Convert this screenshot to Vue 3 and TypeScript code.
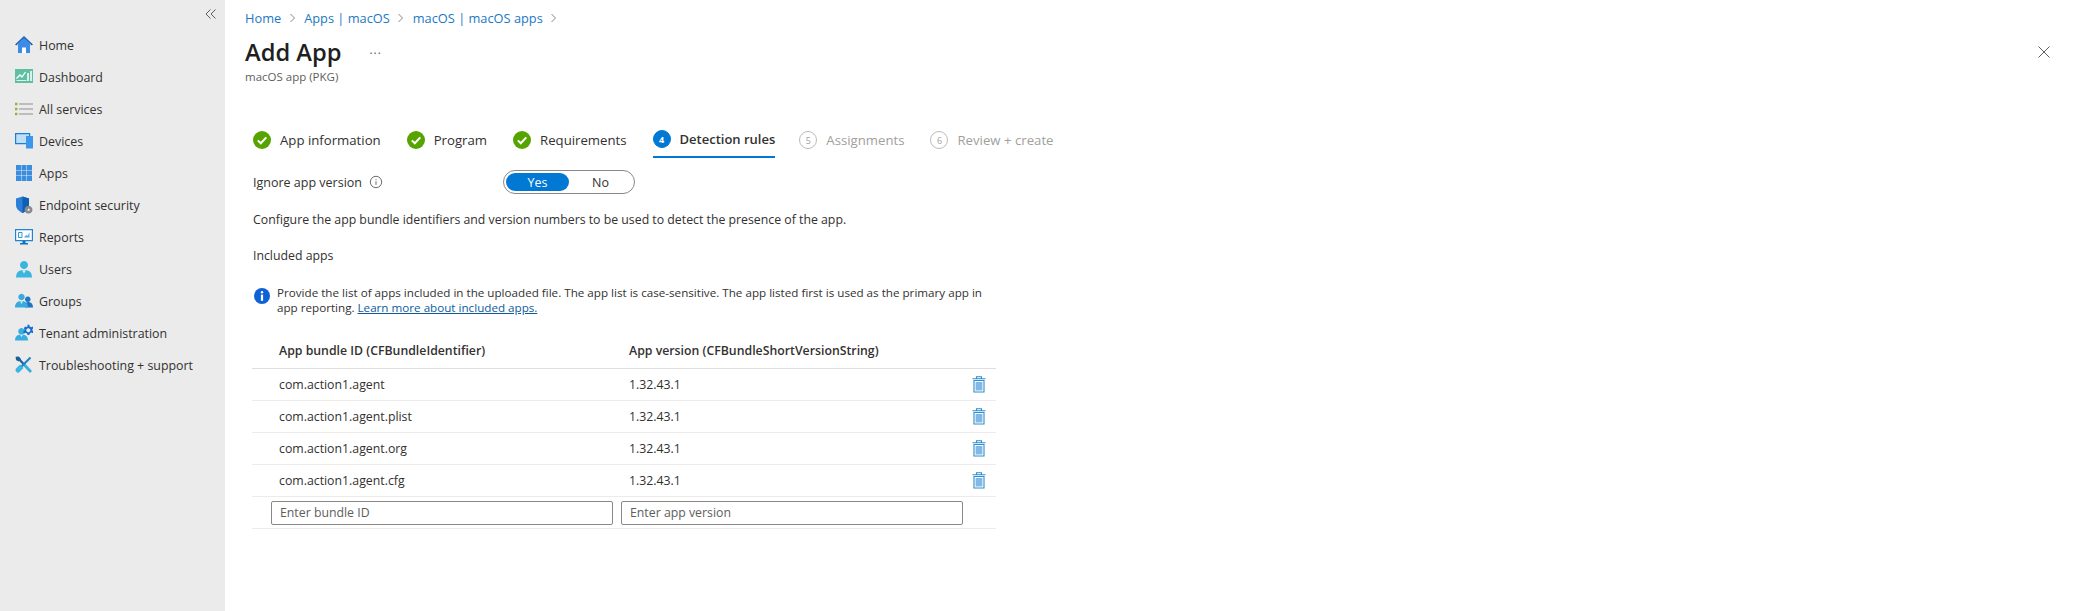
<template>
  <div class="page">
    <aside class="sidebar">
      <div class="collapse">
        <svg width="12" height="12" viewBox="0 0 12 12" fill="none" stroke="#605e5c" stroke-width="1">
          <path d="M5.500 1.500 1 6l4.500 4.500M10.500 1.500 6 6l4.500 4.500" />
        </svg>
      </div>
      <nav class="nav">
        <a v-for="item in navItems" :key="item.label" class="nav-item">
          <svg class="nav-icon" width="18" height="18" viewBox="0 0 18 18">
            <path
              v-for="(p, i) in item.icon"
              :key="i"
              :d="p.d"
              :fill="p.fill ?? 'none'"
              :stroke="p.stroke"
              :stroke-width="p.sw"
              fill-rule="evenodd"
            />
          </svg>
          <span>{{ item.label }}</span>
        </a>
      </nav>
    </aside>

    <main class="main">
      <div class="topbar">
        <div>
          <div class="crumbs">
            <template v-for="c in crumbs" :key="c">
              <a class="crumb">{{ c }}</a>
              <svg class="crumb-sep" width="8" height="10" viewBox="0 0 8 10" fill="none" stroke="#8a8886">
                <path d="M1.500 1 5.500 5l-4 4" />
              </svg>
            </template>
          </div>
          <div class="title-row">
            <h1>Add App</h1>
            <span class="more">...</span>
          </div>
          <div class="subtitle">macOS app (PKG)</div>
        </div>
        <svg class="close" width="12" height="12" viewBox="0 0 12 12" stroke="#605e5c" stroke-width="1">
          <path d="M.5.5l11 11M11.500.5l-11 11" />
        </svg>
      </div>

      <div class="steps">
        <div v-for="s in steps" :key="s.label" class="step" :class="s.state">
          <svg v-if="s.state === 'done'" width="18" height="18" viewBox="0 0 18 18">
            <circle cx="9" cy="9" r="9" fill="#57a300" />
            <path d="M4.800 9.400 7.800 12.300 13.300 6.400" fill="none" stroke="#fff" stroke-width="2" />
          </svg>
          <span v-else class="step-num">{{ s.num }}</span>
          <span class="step-label">{{ s.label }}</span>
        </div>
      </div>

      <div class="form">
        <div class="field-row">
          <label class="field-label">
            Ignore app version
            <svg width="14" height="14" viewBox="0 0 14 14" fill="none" stroke="#605e5c">
              <circle cx="7" cy="7" r="5.700" stroke-width=".9" />
              <path d="M7 6.200v3.600M7 4.200v1" stroke-width=".9" />
            </svg>
          </label>
          <div class="toggle">
            <span class="opt on">Yes</span>
            <span class="opt">No</span>
          </div>
        </div>

        <p class="desc">Configure the app bundle identifiers and version numbers to be used to detect the presence of the app.</p>
        <p class="section-label">Included apps</p>

        <div class="notice">
          <svg width="18" height="18" viewBox="0 0 18 18">
            <circle cx="9" cy="9" r="8" fill="#0f62d6" />
            <circle cx="9" cy="5.200" r="1.200" fill="#fff" />
            <path d="M7.900 7.600h2.200v6.200H7.900z" fill="#fff" />
          </svg>
          <div class="notice-text">
            <div>Provide the list of apps included in the uploaded file. The app list is case-sensitive. The app listed first is used as the primary app in</div>
            <div class="notice-line">
              <span>app reporting.</span>
              <a class="learn">Learn more about included apps.</a>
            </div>
          </div>
        </div>

        <div class="table">
          <div class="row head">
            <span class="c1">App bundle ID (CFBundleIdentifier)</span>
            <span class="c2">App version (CFBundleShortVersionString)</span>
          </div>
          <div v-for="b in bundles" :key="b" class="row">
            <span class="c1">{{ b }}</span>
            <span class="c2">1.32.43.1</span>
            <svg class="trash" width="14" height="17" viewBox="0 0 14 17">
              <path d="M2 4.500h10V16H2z" fill="#fff" stroke="#2f8fd0" stroke-width="1.100" />
              <path d="M3.600 6h6.800v8.500H3.600z" fill="#82b8e6" />
              <path d="M.5 2.800h13M4.500 2.600V.8h5v1.800" fill="none" stroke="#2f8fd0" stroke-width="1.100" />
            </svg>
          </div>
          <div class="row inputs">
            <input class="box" placeholder="Enter bundle ID" />
            <input class="box" placeholder="Enter app version" />
          </div>
        </div>
      </div>
    </main>
  </div>
</template>

<script setup lang="ts">
interface IconPath {
  d: string
  fill?: string
  stroke?: string
  sw?: number
}

const navItems: { label: string; icon: IconPath[] }[] = [
  {
    label: 'Home',
    icon: [
      { d: 'M3 8 9 2.500 15 8v9H3z', fill: '#3c8ce7' },
      { d: 'M7 17v-5.500h4V17z', fill: '#fff' },
      { d: 'M9 0l9 8.600-1.300 1L9 2.400 1.300 9.600 0 8.600z', fill: '#1a66bd' },
    ],
  },
  {
    label: 'Dashboard',
    icon: [
      { d: 'M0 1h18v14H0z', fill: '#5fbfa2' },
      { d: 'M1.500 10.500 5 7l2 2 3.500-5', stroke: '#fff', sw: 1.300 },
      { d: 'M1.500 12.500h10', stroke: '#dff3ec', sw: 1 },
      { d: 'M13 5v8M16 3v10', stroke: '#eef8f5', sw: 1.700 },
    ],
  },
  {
    label: 'All services',
    icon: [
      { d: 'M4 4h14M4 9h14M4 14h14', stroke: '#8f8f8f', sw: 1.200 },
      { d: 'M0 2.800h2.400v2.400H0zM0 7.800h2.400v2.400H0zM0 12.800h2.400v2.400H0z', fill: '#8db43c' },
    ],
  },
  {
    label: 'Devices',
    icon: [
      { d: 'M.6 1.600h14v10H.6z', fill: '#bfdff5', stroke: '#1c7fd6', sw: 1.200 },
      { d: 'M11 4h7v12.500h-7z', fill: '#3d96e8' },
    ],
  },
  {
    label: 'Apps',
    icon: [
      {
        d: 'M1 1h5v5H1zM6.500 1h5v5h-5zM12 1h5v5h-5zM1 6.500h5v5H1zM6.500 6.500h5v5h-5zM12 6.500h5v5h-5zM1 12h5v5H1zM6.500 12h5v5h-5zM12 12h5v5h-5z',
        fill: '#3a8ee0',
      },
    ],
  },
  {
    label: 'Endpoint security',
    icon: [
      { d: 'M7.500.4 14 2.500v6.500c0 4-3.500 6.500-6.500 8C4.500 15.500 1 13 1 9V2.500z', fill: '#2a80d8' },
      { d: 'M7.500.4 14 2.500v6.500c0 4-3.500 6.500-6.500 8z', fill: '#0f5fb2' },
      { d: 'M13.500 9.800a3.900 3.900 0 1 0 .01 0zM13.500 12.400a1.300 1.300 0 1 1-.01 0z', fill: '#8a8a8a' },
    ],
  },
  {
    label: 'Reports',
    icon: [
      { d: 'M.6 1.600h16.800v11H.6z', fill: '#fff', stroke: '#1b86d8', sw: 1.200 },
      { d: 'M3.500 4.500h3.500v5H3.500z', fill: 'none', stroke: '#2a9bd8', sw: 1 },
      { d: 'M9 9.500 11 7l1.500 1 2-3.500v5z', fill: '#5aa8e0' },
      { d: 'M7.500 13h3v2h2.500v1.500H5V15h2.500z', fill: '#1571b8' },
    ],
  },
  {
    label: 'Users',
    icon: [
      { d: 'M9 1a4 4 0 1 1-.01 0z', fill: '#38b4e0' },
      { d: 'M1 17.400c0-5 2.800-7.400 8-7.400s8 2.400 8 7.400z', fill: '#3cb6dc' },
      { d: 'M7 10.300 9 13.500l2-3.200z', fill: '#d5f0f9' },
    ],
  },
  {
    label: 'Groups',
    icon: [
      { d: 'M12.800 4.500a2.800 2.800 0 1 1-.01 0z', fill: '#1f74c4' },
      { d: 'M10 15.500c0-3.500 1-5.500 3-5.500s5 1 5 5.500z', fill: '#1f74c4' },
      { d: 'M6.500 1.800a3.200 3.200 0 1 1-.01 0z', fill: '#3aa9dc' },
      { d: 'M0 15.500c0-4 2-6.500 6.500-6.500s6.500 2.500 6.500 6.500z', fill: '#3aa9dc' },
      { d: 'M5 9.300 6.500 12 8 9.300z', fill: '#d5f0f9' },
    ],
  },
  {
    label: 'Tenant administration',
    icon: [
      { d: 'M6.500 4a3.300 3.300 0 1 1-.01 0z', fill: '#36aee0' },
      { d: 'M0 16.500c0-4 2.300-6 6.500-6s6.500 2 6.500 6z', fill: '#36aee0' },
      { d: 'M5 10.700 6.500 13 8 10.700z', fill: '#d5f0f9' },
      {
        d: 'M12.300.8h2l.4 1.700 1.500.700 1.500-.8.900 1.600-1.200 1.200.1 1.300 1.100 1.100-.900 1.700-1.500-.7-1.400.9-.4 1.600h-1.900l-.5-1.700-1.300-.7-1.600.7-1-1.600 1.300-1.200V5.400L9 4.200 9.900 2.500l1.700.6 1-.7zM13.300 4.300a2 2 0 1 0 .01 0z',
        fill: '#1570cc',
      },
    ],
  },
  {
    label: 'Troubleshooting + support',
    icon: [
      { d: 'M3 2 9 8.500', stroke: '#1b5f9e', sw: 2.200 },
      { d: 'M9 8.500 16 16', stroke: '#36b0dc', sw: 2.800 },
      { d: 'M15.500 1.500 3.500 13.500', stroke: '#1f83c4', sw: 2.200 },
      { d: 'M5 8.500 1 12.500c-1.500 2 .5 5 3 4l4.500-4.500z', fill: '#3db5e0' },
      { d: 'M.6.800 3.800.4 6 3 3.500 5.500 1 4z', fill: '#1b5f9e' },
    ],
  },
]

const crumbs = ['Home', 'Apps | macOS', 'macOS | macOS apps']

const steps = [
  { label: 'App information', state: 'done', num: 1 },
  { label: 'Program', state: 'done', num: 2 },
  { label: 'Requirements', state: 'done', num: 3 },
  { label: 'Detection rules', state: 'active', num: 4 },
  { label: 'Assignments', state: 'todo', num: 5 },
  { label: 'Review + create', state: 'todo', num: 6 },
]

const bundles = ['com.action1.agent', 'com.action1.agent.plist', 'com.action1.agent.org', 'com.action1.agent.cfg']
</script>

<style>
html,
body {
  margin: 0;
  background: #fff;
}
</style>

<style scoped>
.page {
  display: flex;
  height: 611px;
  overflow: hidden;
  font-family: 'Open Sans', 'Noto Sans', sans-serif;
  font-size: 12.4px;
  color: #323130;
}

.sidebar {
  width: 225px;
  flex: none;
  background: #ebebeb;
  box-sizing: border-box;
  padding-top: 8px;
}

.collapse {
  display: flex;
  justify-content: flex-end;
  padding-right: 8px;
  height: 21px;
}

.nav {
  display: flex;
  flex-direction: column;
}

.nav-item {
  display: flex;
  align-items: center;
  gap: 6px;
  height: 32px;
  padding-left: 15px;
}

.main {
  flex: 1;
  min-width: 0;
  padding-left: 20px;
}

.topbar {
  display: flex;
  justify-content: space-between;
  align-items: flex-start;
  padding-top: 9px;
}

.close {
  margin: 37px 23px 0 0;
}

.crumbs {
  display: flex;
  align-items: center;
  height: 18px;
  gap: 7.500px;
  font-size: 12.800px;
}

.crumb {
  color: #1b78c4;
}

.title-row {
  display: flex;
  align-items: center;
  margin-top: 9px;
  height: 32px;
}

h1 {
  margin: 0;
  font-size: 23.700px;
  font-weight: 600;
  color: #201f1e;
  line-height: 32px;
}

.more {
  margin-left: 28px;
  color: #605e5c;
  font-size: 12px;
  letter-spacing: 1px;
  position: relative;
  top: -3px;
}

.subtitle {
  font-size: 11.500px;
  color: #605e5c;
  margin-top: 1px;
  line-height: 16px;
}

.steps {
  display: flex;
  margin: 39px 0 0 8px;
  gap: 26px;
  height: 36px;
  font-size: 13.200px;
}

.step {
  display: flex;
  align-items: center;
  gap: 9px;
  height: 32px;
  box-sizing: border-box;
}

.step.active {
  border-bottom: 2px solid #0078d4;
  height: 34px;
  padding-bottom: 2px;
  margin-right: -2px;
}

.step.active .step-label {
  font-weight: 600;
  font-size: 13px;
}

.step.todo {
  color: #a19f9d;
}

.step-num {
  box-sizing: border-box;
  width: 18px;
  height: 18px;
  border-radius: 50%;
  display: flex;
  align-items: center;
  justify-content: center;
  font-size: 9px;
  border: 1px solid #bdbbb9;
}

.step.active .step-num {
  background: #0078d4;
  border-color: #0078d4;
  color: #fff;
  font-weight: 700;
}

.form {
  padding-left: 8px;
  width: 744px;
  font-size: 12.300px;
}

.field-row {
  display: flex;
  align-items: center;
  height: 24px;
  margin-top: 10px;
}

.field-label {
  display: flex;
  align-items: center;
  gap: 7px;
  width: 250px;
  font-size: 12.500px;
}

.toggle {
  box-sizing: border-box;
  width: 132px;
  height: 24px;
  border: 1px solid #8a8886;
  border-radius: 12px;
  padding: 2px;
  display: flex;
  font-size: 12.500px;
}

.opt {
  flex: 1;
  display: flex;
  align-items: center;
  justify-content: center;
  border-radius: 10px;
}

.opt.on {
  background: #0078d4;
  color: #fff;
}

.desc,
.section-label {
  margin: 0;
  line-height: 18px;
}

.desc {
  margin-top: 17px;
}

.section-label {
  margin-top: 18px;
}

.notice {
  display: flex;
  gap: 6px;
  margin-top: 20px;
}

.notice svg {
  flex: none;
  margin-top: 2px;
}

.notice-text {
  font-size: 11.650px;
  line-height: 15px;
}

.learn {
  color: #0b5a9e;
  text-decoration: underline;
  margin-left: 3px;
}

.table {
  margin: 22px 0 0 -1px;
  width: 744px;
}

.row {
  display: flex;
  align-items: center;
  height: 32px;
  box-sizing: border-box;
  border-bottom: 1px solid #edebe9;
  position: relative;
}

.row.head {
  font-weight: 600;
  border-bottom-color: #e1dfdd;
  padding-bottom: 4px;
}

.c1 {
  width: 377px;
  padding-left: 27px;
  box-sizing: border-box;
}

.row.inputs {
  padding-left: 19px;
  gap: 8px;
}

.box {
  box-sizing: border-box;
  width: 342px;
  height: 24px;
  border: 1px solid #8a8886;
  border-radius: 2px;
  padding: 0 8px;
  font: inherit;
  color: #323130;
  outline: none;
}

.box::placeholder {
  color: #605e5c;
  opacity: 1;
}

.trash {
  position: absolute;
  right: 10px;
  top: 7px;
}
</style>
